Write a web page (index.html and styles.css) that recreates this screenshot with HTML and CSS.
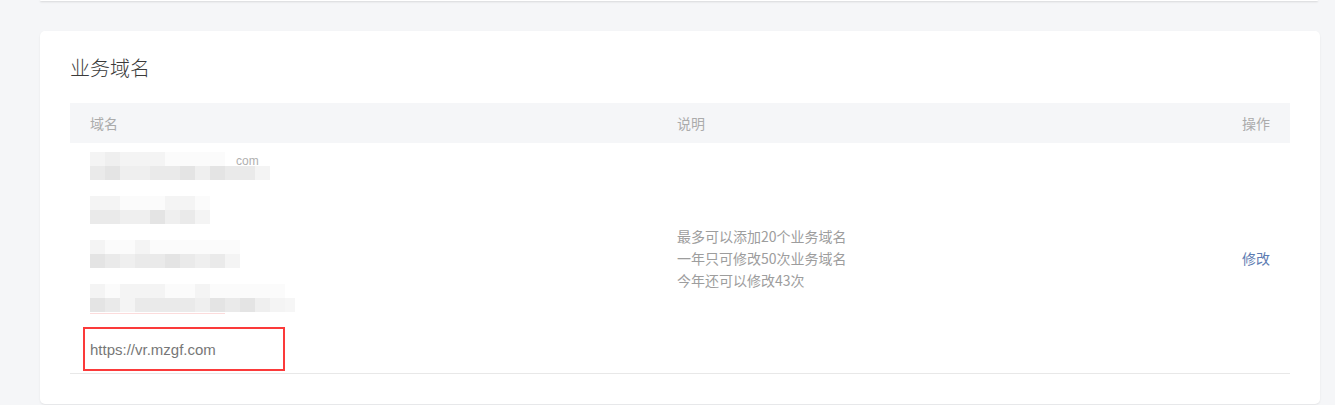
FILE: index.html
```html
<!DOCTYPE html>
<html lang="zh-CN">
<head>
<meta charset="utf-8">
<title>业务域名</title>
<link rel="stylesheet" href="styles.css">
</head>
<body>
<div class="page">
  <div class="prev-card"></div>
  <section class="card">
    <h2 class="title">业务域名</h2>
    <div class="table">
      <div class="thead">
        <div class="th">域名</div>
        <div class="th">说明</div>
        <div class="th th-right">操作</div>
      </div>
      <div class="tbody">
        <div class="td td-domains">
          <div class="mosaic">
            <div class="mrow"><i class="a"></i><i class="b"></i><i class="a"></i><i class="a"></i><i class="a"></i><i class="w"></i><i class="w"></i><i class="w"></i><i class="w"></i><span class="com">com</span></div>
            <div class="mrow"><i class="c"></i><i class="d"></i><i class="b"></i><i class="b"></i><i class="c"></i><i class="c"></i><i class="d"></i><i class="b"></i><i class="d"></i><i class="c"></i><i class="c"></i><i class="a"></i></div>
          </div>
          <div class="mosaic">
            <div class="mrow"><i class="a"></i><i class="a"></i><i class="w"></i><i class="w"></i><i class="w"></i><i class="a"></i><i class="a"></i><i class="w"></i></div>
            <div class="mrow"><i class="c"></i><i class="c"></i><i class="b"></i><i class="b"></i><i class="d"></i><i class="b"></i><i class="c"></i><i class="a"></i></div>
          </div>
          <div class="mosaic">
            <div class="mrow"><i class="a"></i><i class="w"></i><i class="w"></i><i class="a"></i><i class="w"></i><i class="w"></i><i class="w"></i><i class="w"></i><i class="w"></i><i class="w"></i></div>
            <div class="mrow"><i class="d"></i><i class="c"></i><i class="b"></i><i class="c"></i><i class="c"></i><i class="d"></i><i class="c"></i><i class="b"></i><i class="c"></i><i class="a"></i></div>
          </div>
          <div class="mosaic mosaic-last">
            <div class="mrow"><i class="a"></i><i class="w"></i><i class="a"></i><i class="a"></i><i class="a"></i><i class="w"></i><i class="w"></i><i class="a"></i><i class="w"></i><i class="w"></i><i class="w"></i><i class="w"></i><i class="w"></i></div>
            <div class="mrow"><i class="d"></i><i class="c"></i><i class="a"></i><i class="c"></i><i class="c"></i><i class="c"></i><i class="c"></i><i class="b"></i><i class="d"></i><i class="c"></i><i class="d"></i><i class="b"></i><i class="a"></i><i class="half"></i></div>
            <div class="redline"></div>
          </div>
          <div class="highlight">https://vr.mzgf.com</div>
        </div>
        <div class="td td-desc">
          <p>最多可以添加20个业务域名</p>
          <p>一年只可修改50次业务域名</p>
          <p>今年还可以修改43次</p>
        </div>
        <div class="td td-op">
          <a class="link" href="#">修改</a>
        </div>
      </div>
    </div>
  </section>
</div>
</body>
</html>
```

FILE: styles.css
```css
* { box-sizing: border-box; }
html, body { margin: 0; padding: 0; }
body {
  background: #f5f6f8;
  font-family: "Liberation Sans", "Noto Sans CJK SC", sans-serif;
  color: #666;
  width: 1335px;
  height: 405px;
  overflow: hidden;
}
.page {
  padding: 0 15px 0 40px;
}
.prev-card {
  width: 1278px;
  height: 1px;
  background: #fff;
  border-radius: 0 0 4px 4px;
  box-shadow: 0 1px 2px rgba(0, 0, 0, 0.18);
}
.card {
  margin-top: 30px;
  width: 1280px;
  height: 373px;
  background: #fff;
  border-radius: 5px;
  box-shadow: 0 1px 2px rgba(0, 0, 0, 0.08);
  padding: 25px 30px 0 30px;
}
.title {
  margin: 0;
  font-family: "Noto Sans CJK SC", sans-serif;
  font-weight: 300;
  font-size: 20px;
  line-height: 24px;
  color: #3a3a3a;
}
.table {
  margin-top: 23px;
  width: 1220px;
}
.thead, .tbody {
  display: grid;
  grid-template-columns: 587px 1fr 120px;
}
.thead {
  height: 40px;
  background: #f5f6f8;
  align-items: center;
}
.th {
  padding: 0 20px;
  font-family: "Noto Sans CJK SC", sans-serif;
  font-size: 14px;
  color: #ababab;
}
.th-right { text-align: right; }
.tbody {
  border-bottom: 1px solid #e8e8e8;
  height: 231px;
}
.td {
  padding: 0 20px;
}
.td-domains {
  padding-top: 9px;
  display: flex;
  flex-direction: column;
  align-items: flex-start;
  gap: 16px;
}
.mosaic {
  display: flex;
  flex-direction: column;
  height: 28px;
}
.mrow {
  display: flex;
  height: 14px;
}
.mrow i {
  display: block;
  width: 15px;
  height: 14px;
}
.mrow i.w { background: #fbfbfb; }
.mrow i.a { background: #f4f4f4; }
.mrow i.b { background: #efefef; }
.mrow i.c { background: #eaeaea; }
.mrow i.d { background: #e4e4e4; }
.mrow i.half { width: 10px; background: #f6f6f6; }
.com {
  font-size: 12px;
  line-height: 18px;
  color: #b0b0b0;
  margin-left: 11px;
}
.mosaic-last { height: 30px; }
.redline {
  width: 135px;
  height: 1px;
  margin-top: 1px;
  background: #fcdcdc;
}
.highlight {
  margin: -3px 0 0 -7px;
  width: 202px;
  height: 44px;
  border: 2px solid #fb3a3a;
  padding-left: 5px;
  display: flex;
  align-items: center;
  font-size: 15px;
  color: #777;
}
.td-desc {
  display: flex;
  flex-direction: column;
  justify-content: center;
}
.td-desc p {
  margin: 0;
  font-family: "Noto Sans CJK SC", sans-serif;
  font-size: 14px;
  line-height: 22px;
  color: #9d9d9d;
}
.td-op {
  display: flex;
  align-items: center;
  justify-content: flex-end;
}
.link {
  font-family: "Noto Sans CJK SC", sans-serif;
  font-size: 14px;
  color: #5d7cb2;
  text-decoration: none;
}
```
